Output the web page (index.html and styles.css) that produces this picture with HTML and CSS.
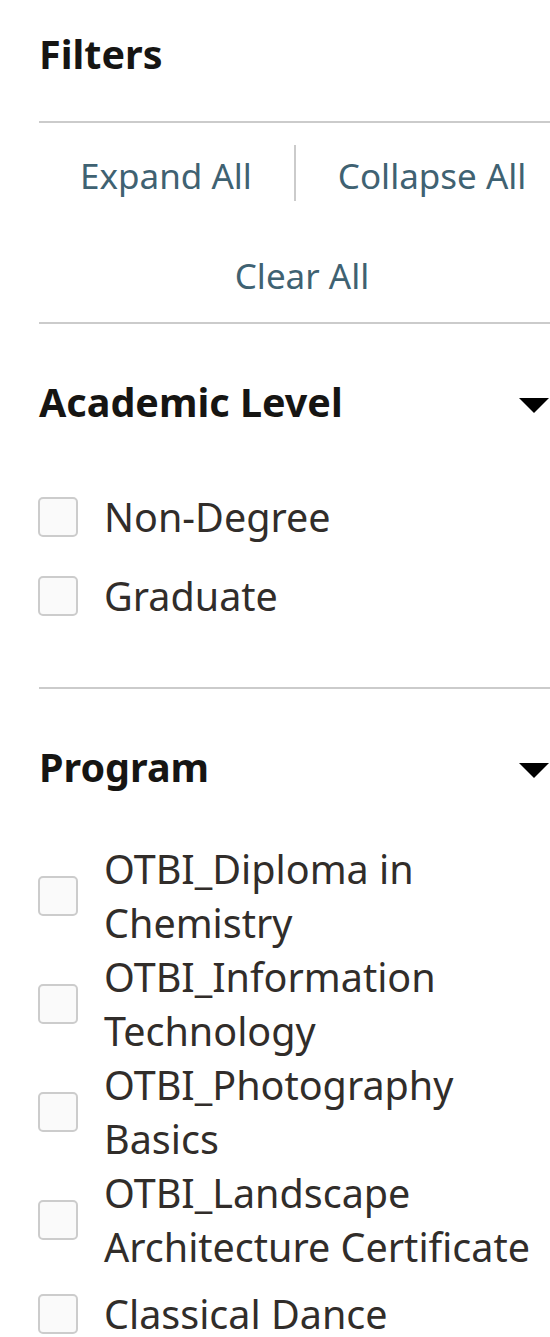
FILE: index.html
```html
<!DOCTYPE html>
<html lang="en">
<head>
<meta charset="utf-8">
<title>Filters</title>
<link rel="stylesheet" href="styles.css">
</head>
<body>
<aside class="panel">
  <h1 class="title">Filters</h1>
  <div class="divider"></div>
  <div class="actions">
    <div class="action-row">
      <button class="link-btn">Expand All</button>
      <span class="vsep"></span>
      <button class="link-btn">Collapse All</button>
    </div>
    <div class="action-row center">
      <button class="link-btn clear">Clear All</button>
    </div>
  </div>
  <div class="divider"></div>

  <section class="facet">
    <div class="facet-head">
      <h2 class="facet-title">Academic Level</h2>
      <svg class="caret" width="30" height="15" viewBox="0 0 30 15"><polygon points="0,0 30,0 15,15" fill="#000"/></svg>
    </div>
    <ul class="options">
      <li class="option"><span class="box"></span><span class="label">Non-Degree</span></li>
      <li class="option"><span class="box"></span><span class="label">Graduate</span></li>
    </ul>
  </section>
  <div class="divider"></div>

  <section class="facet">
    <div class="facet-head">
      <h2 class="facet-title">Program</h2>
      <svg class="caret" width="30" height="15" viewBox="0 0 30 15"><polygon points="0,0 30,0 15,15" fill="#000"/></svg>
    </div>
    <ul class="options">
      <li class="option"><span class="box"></span><span class="label">OTBI_Diploma in Chemistry</span></li>
      <li class="option"><span class="box"></span><span class="label">OTBI_Information Technology</span></li>
      <li class="option"><span class="box"></span><span class="label">OTBI_Photography Basics</span></li>
      <li class="option"><span class="box"></span><span class="label">OTBI_Landscape Architecture Certificate</span></li>
      <li class="option"><span class="box"></span><span class="label">Classical Dance</span></li>
    </ul>
  </section>
</aside>
</body>
</html>
```

FILE: styles.css
```css
html, body {
  margin: 0;
  padding: 0;
  background: #ffffff;
}
body {
  font-family: "Noto Sans", "Open Sans", sans-serif;
  color: #312d2a;
  overflow: hidden;
}
.panel {
  padding-left: 39px;
  width: 511px;
}
.title {
  margin: 0;
  padding-top: 27px;
  font-size: 39.5px;
  line-height: 54px;
  font-weight: 700;
  color: #161513;
  margin-bottom: 40px;
}
.divider {
  height: 2px;
  background: #cbcbcb;
}
.actions {
  padding: 24px 0 19px;
  display: flex;
  flex-direction: column;
  gap: 44px;
}
.action-row {
  display: flex;
  align-items: stretch;
  height: 56px;
}
.action-row.center {
  justify-content: center;
}
.link-btn {
  border: 0;
  background: transparent;
  font-family: "Noto Sans", "Open Sans", sans-serif;
  font-size: 35px;
  line-height: 58px;
  color: #3f6272;
  padding: 0 42px 0 41px;
  margin: 0;
  white-space: nowrap;
  cursor: pointer;
}
.link-btn + .vsep + .link-btn {
  padding-left: 42px;
}
.link-btn.clear {
  margin-left: 15px;
  padding: 0;
}
.vsep {
  width: 2px;
  background: #cbcbcb;
  flex: none;
  margin-top: -2px;
  margin-bottom: 2px;
}
.facet {
  padding: 51px 0 52px;
}
.facet-head {
  display: flex;
  justify-content: space-between;
  align-items: center;
  height: 54px;
  margin-bottom: 48px;
}
.facet-title {
  margin: 0;
  font-size: 39.5px;
  line-height: 54px;
  font-weight: 700;
  color: #161513;
}
.caret {
  display: block;
  margin-right: 1px;
  margin-top: 6px;
}
.options {
  list-style: none;
  margin: 0;
  padding: 0;
}
.option {
  display: flex;
  align-items: center;
  min-height: 79px;
}
.box {
  flex: none;
  width: 36px;
  height: 36px;
  border: 2px solid #cccccc;
  border-radius: 5px;
  background: #fafafa;
  margin-left: -1px;
  margin-right: 26px;
}
.label {
  font-size: 39.5px;
  line-height: 54px;
  color: #312d2a;
}
```
